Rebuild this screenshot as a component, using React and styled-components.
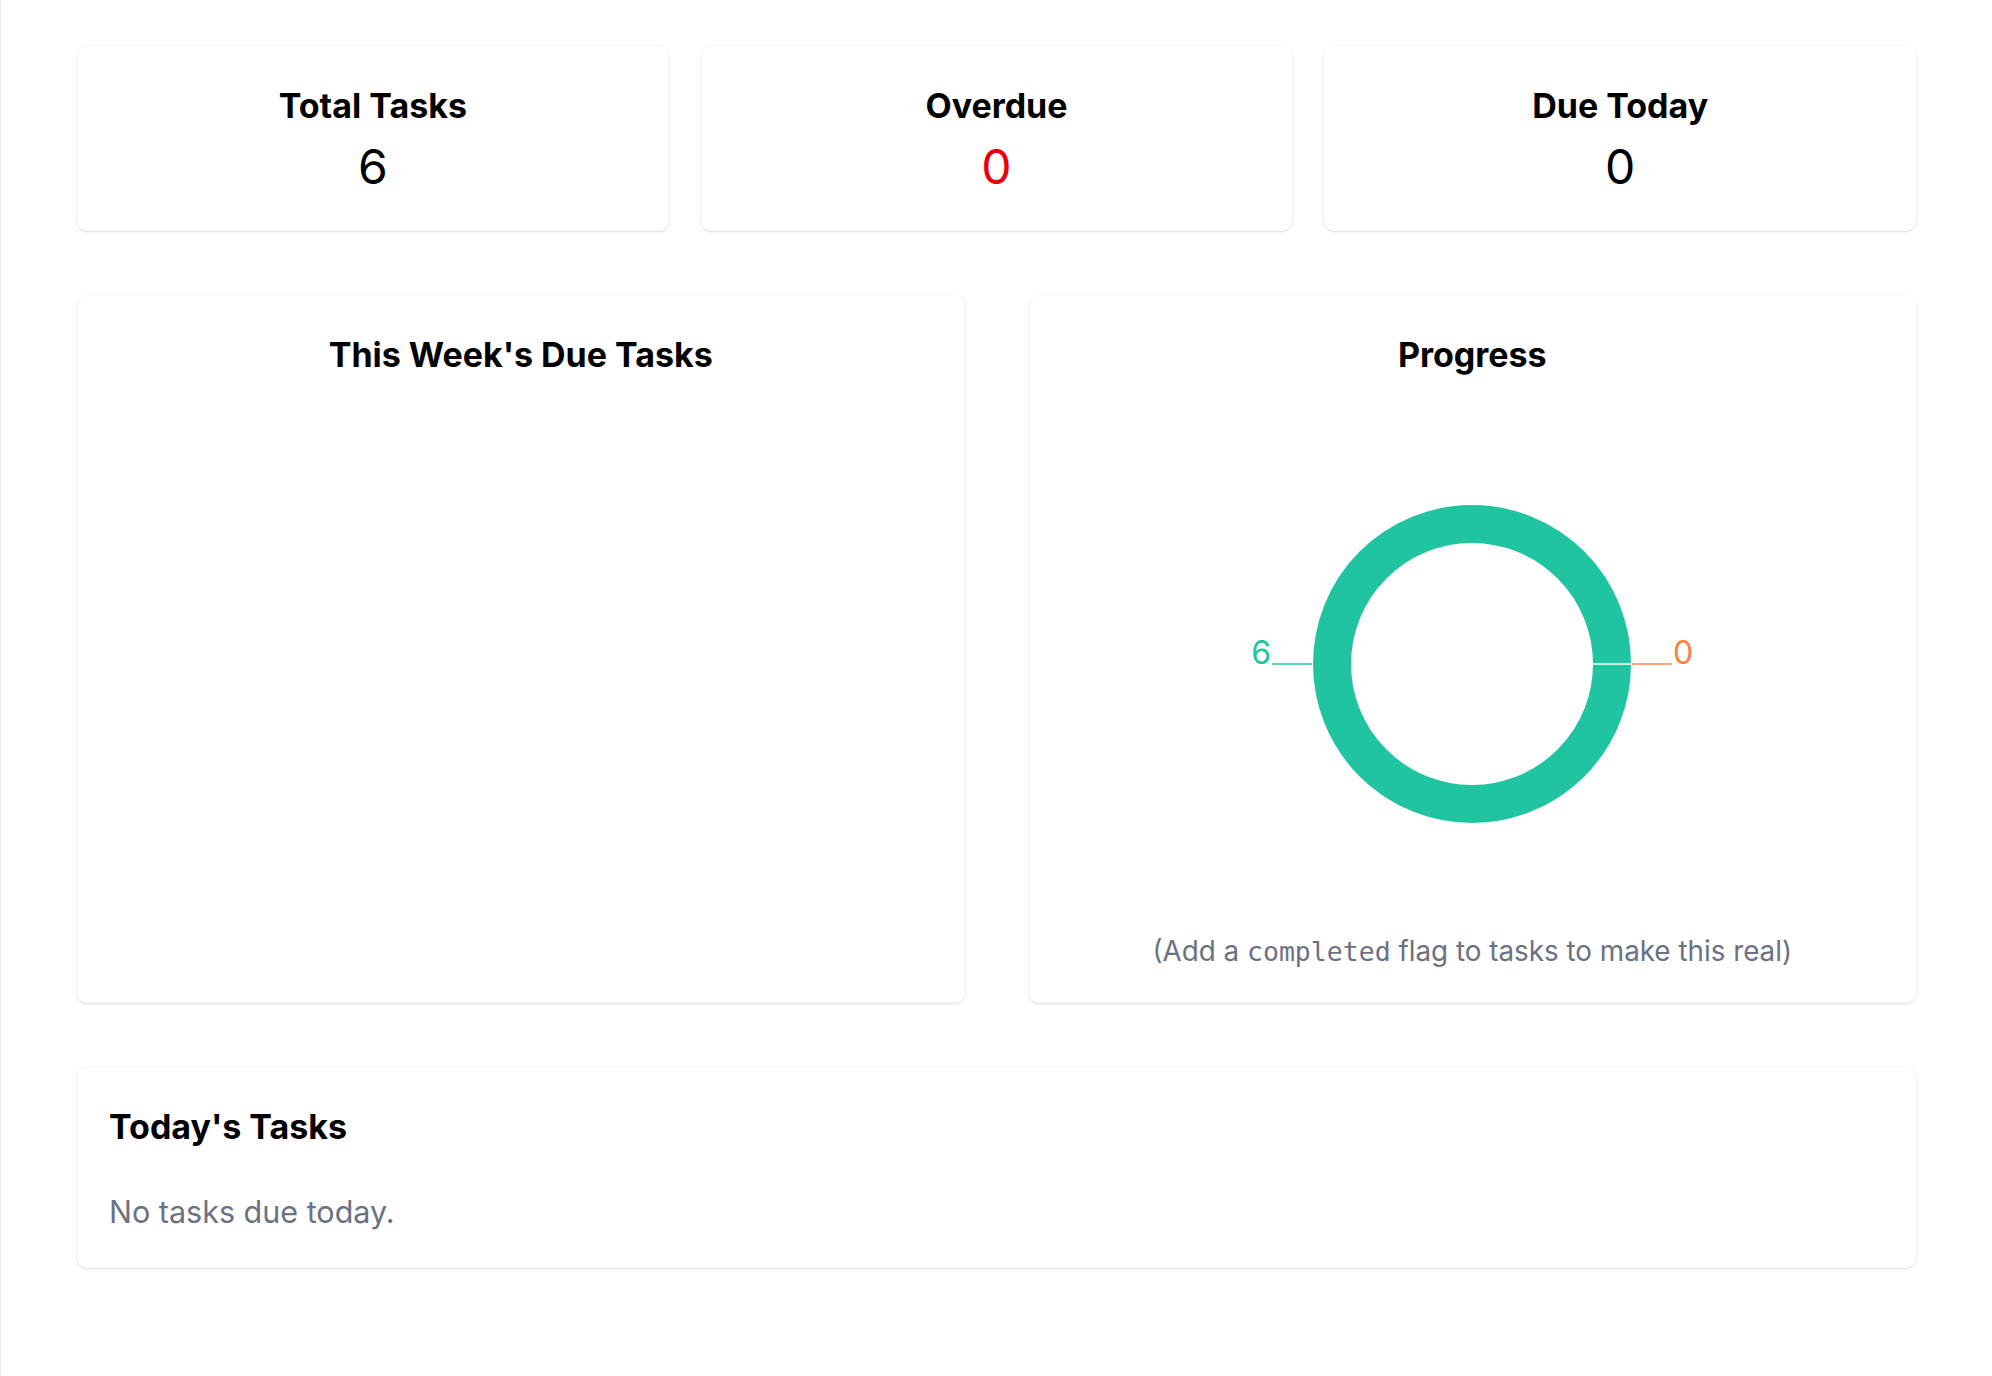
import React from "react";
import styled, { createGlobalStyle } from "styled-components";

const GlobalStyle = createGlobalStyle`
  html, body {
    margin: 0;
    padding: 0;
    background: #ffffff;
  }
  body {
    font-family: Inter, "Noto Sans", "Liberation Sans", sans-serif;
    color: #000;
  }
  * { box-sizing: border-box; }
`;

const Page = styled.main`
  min-height: 1376px;
  border-left: 1px solid #ececec;
  padding: 46px 76px 60px 76px;
  display: flex;
  flex-direction: column;
  gap: 64px;
`;

const Grid = styled.section`
  display: grid;
  grid-template-columns: repeat(${(p) => p.$cols}, 1fr);
  gap: ${(p) => p.$gap}px;
`;

const Card = styled.div`
  background: #fff;
  border-radius: 10px;
  box-shadow: 0 1px 3px 0 rgba(0, 0, 0, 0.1), 0 1px 2px -1px rgba(0, 0, 0, 0.1),
    0 0 0 1px rgba(0, 0, 0, 0.015);
`;

const StatCard = styled(Card)`
  padding: 40px 24px 36px;
  display: flex;
  flex-direction: column;
  align-items: center;
`;

const CardTitle = styled.h3`
  margin: 0;
  font-size: 34px;
  line-height: 1.2;
  font-weight: 700;
  color: #000;
  text-align: center;
`;

const StatValue = styled.div`
  margin-top: 11px;
  font-size: 48px;
  line-height: 1.2;
  font-weight: 400;
  color: ${(p) => p.$color || "#000"};
`;

const PanelCard = styled(Card)`
  padding: 40px 24px 30px;
  display: flex;
  flex-direction: column;
  align-items: center;
`;

const ChartWrap = styled.div`
  margin-top: 38px;
  width: 100%;
  display: flex;
  justify-content: center;
`;

const Caption = styled.p`
  margin: 17px 0 0;
  font-size: 27.8px;
  line-height: 1.5;
  color: #6a7282;
  text-align: center;
`;

const Code = styled.code`
  font-family: "DejaVu Sans Mono", "Liberation Mono", monospace;
  font-size: 26.5px;
`;

const TodayCard = styled(Card)`
  margin-top: 1px;
  padding: 39.5px 32px 33.5px;
`;

const TodayTitle = styled.h2`
  margin: 0;
  font-size: 34px;
  line-height: 1.2;
  font-weight: 700;
  color: #000;
`;

const EmptyText = styled.p`
  margin: 40.5px 0 0;
  font-size: 30.5px;
  line-height: 1.5;
  color: #6a7282;
`;

const TEAL = "#21C4A0";
const ORANGE = "#FF8042";

function Donut() {
  const w = 460;
  const h = 500;
  const cx = 230;
  const cy = 250;
  const outer = 159;
  const inner = 121;
  const mid = (outer + inner) / 2;
  return (
    <svg width={w} height={h} viewBox={`0 0 ${w} ${h}`}>
      <circle cx={cx} cy={cy} r={mid} fill="none" stroke={TEAL} strokeWidth={outer - inner} />
      <line x1={cx + inner} y1={cy} x2={cx + outer} y2={cy} stroke="#fff" strokeWidth="1.5" />
      <line x1={cx - outer - 1} y1={cy} x2={cx - outer - 41} y2={cy} stroke={TEAL} strokeWidth="1.5" />
      <text
        x={cx - outer - 42}
        y={cy}
        textAnchor="end"
        fill={TEAL}
        fontSize="32"
        fontFamily="Inter, 'Liberation Sans', sans-serif"
      >
        6
      </text>
      <line x1={cx + outer + 1} y1={cy} x2={cx + outer + 41} y2={cy} stroke={ORANGE} strokeWidth="1.5" />
      <text
        x={cx + outer + 42}
        y={cy}
        textAnchor="start"
        fill={ORANGE}
        fontSize="32"
        fontFamily="Inter, 'Liberation Sans', sans-serif"
      >
        0
      </text>
    </svg>
  );
}

export default function App() {
  const stats = [
    { label: "Total Tasks", value: 6 },
    { label: "Overdue", value: 0, color: "#e7000b" },
    { label: "Due Today", value: 0 },
  ];
  return (
    <>
      <GlobalStyle />
      <Page>
        <Grid $cols={3} $gap={32}>
          {stats.map((s) => (
            <StatCard key={s.label}>
              <CardTitle>{s.label}</CardTitle>
              <StatValue $color={s.color}>{s.value}</StatValue>
            </StatCard>
          ))}
        </Grid>
        <Grid $cols={2} $gap={64}>
          <PanelCard>
            <CardTitle>This Week's Due Tasks</CardTitle>
          </PanelCard>
          <PanelCard>
            <CardTitle>Progress</CardTitle>
            <ChartWrap>
              <Donut />
            </ChartWrap>
            <Caption>
              (Add a <Code>completed</Code> flag to tasks to make this real)
            </Caption>
          </PanelCard>
        </Grid>
        <TodayCard>
          <TodayTitle>Today's Tasks</TodayTitle>
          <EmptyText>No tasks due today.</EmptyText>
        </TodayCard>
      </Page>
    </>
  );
}
